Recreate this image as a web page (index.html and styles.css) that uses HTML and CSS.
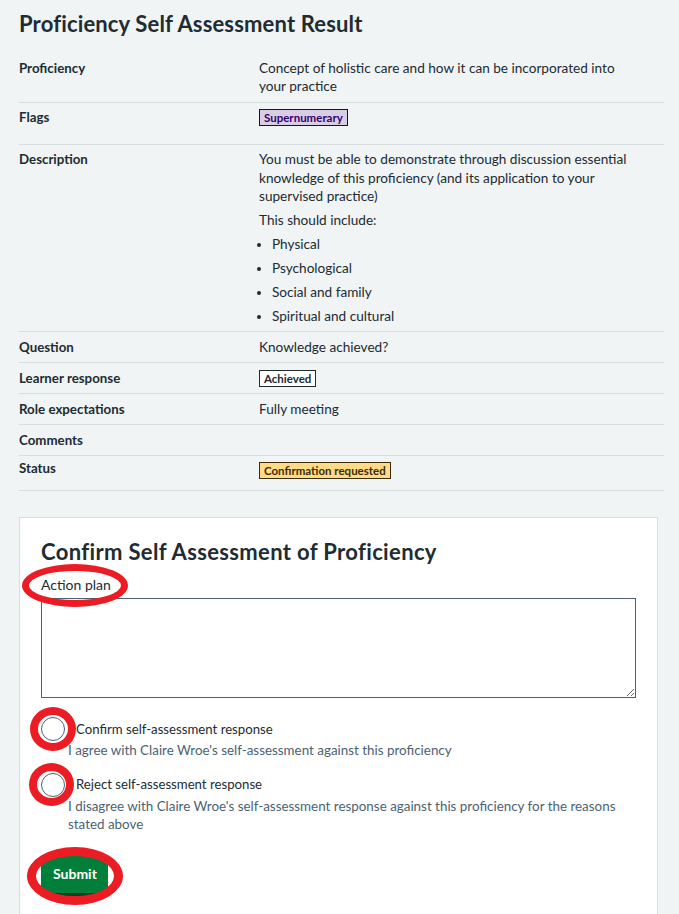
FILE: index.html
```html
<!DOCTYPE html>
<html lang="en">
<head>
<meta charset="utf-8">
<title>Proficiency Self Assessment Result</title>
<link rel="stylesheet" href="styles.css">
</head>
<body>
<main class="page">
  <h1 class="title">Proficiency Self Assessment Result</h1>
  <dl class="summary">
    <div class="row">
      <dt>Proficiency</dt>
      <dd>Concept of holistic care and how it can be incorporated into your practice</dd>
    </div>
    <div class="row row-flags">
      <dt>Flags</dt>
      <dd><span class="tag tag-purple">Supernumerary</span></dd>
    </div>
    <div class="row">
      <dt>Description</dt>
      <dd>
        <p>You must be able to demonstrate through discussion essential knowledge of this proficiency (and its application to your supervised practice)</p>
        <p>This should include:</p>
        <ul>
          <li>Physical</li>
          <li>Psychological</li>
          <li>Social and family</li>
          <li>Spiritual and cultural</li>
        </ul>
      </dd>
    </div>
    <div class="row">
      <dt>Question</dt>
      <dd>Knowledge achieved?</dd>
    </div>
    <div class="row">
      <dt>Learner response</dt>
      <dd><span class="tag tag-white">Achieved</span></dd>
    </div>
    <div class="row">
      <dt>Role expectations</dt>
      <dd>Fully meeting</dd>
    </div>
    <div class="row">
      <dt>Comments</dt>
      <dd></dd>
    </div>
    <div class="row row-status">
      <dt>Status</dt>
      <dd><span class="tag tag-yellow">Confirmation requested</span></dd>
    </div>
  </dl>

  <section class="card">
    <h2 class="card-title">Confirm Self Assessment of Proficiency</h2>
    <label class="field-label" for="plan">Action plan</label>
    <textarea id="plan" class="textarea"></textarea>

    <div class="radios">
      <div class="radio-item">
        <span class="radio-circle"></span>
        <span class="radio-label">Confirm self-assessment response</span>
        <span class="radio-hint">I agree with Claire Wroe's self-assessment against this proficiency</span>
      </div>
      <div class="radio-item">
        <span class="radio-circle"></span>
        <span class="radio-label">Reject self-assessment response</span>
        <span class="radio-hint">I disagree with Claire Wroe's self-assessment response against this proficiency for the reasons stated above</span>
      </div>
    </div>

    <button class="button" type="button">Submit</button>
  </section>

  <div class="mark mark-plan"></div>
  <div class="mark mark-radio1"></div>
  <div class="mark mark-radio2"></div>
  <div class="mark mark-submit"></div>
</main>
</body>
</html>
```
FILE: styles.css
```css
* { box-sizing: border-box; }

html, body {
  margin: 0;
  padding: 0;
  background: #f0f4f5;
}

body {
  font-family: "Lato", "Liberation Sans", sans-serif;
  font-size: 14px;
  line-height: 18.5px;
  color: #212b32;
}

.page {
  position: relative;
  padding: 10px 15px 0 19px;
  min-height: 914px;
  overflow: hidden;
}

.title {
  margin: 0;
  font-size: 22px;
  line-height: 28px;
  font-weight: 700;
  letter-spacing: 0.15px;
}

.summary {
  margin: 14.5px 0 0;
}

.row {
  display: grid;
  grid-template-columns: 240px 1fr;
  padding: 5.5px 0 6px;
  border-bottom: 1px solid #d8dde0;
}

.row:first-child { padding-top: 6px; }

dt {
  font-weight: 700;
  font-size: 13.3px;
}

dd {
  margin: 0;
  min-height: 18.5px;
  font-size: 13.6px;
  padding-right: 28px;
}

dd p {
  margin: 0 0 5px;
}

dd ul {
  margin: 0;
  padding-left: 13px;
}

dd li {
  margin-top: 5.5px;
}

.row-flags dd { padding-bottom: 11px; }
.row-status { padding: 3px 0 11px; }
.row-status .tag { margin-top: 3px; }

.tag {
  display: inline-block;
  font-size: 11.5px;
  line-height: 15px;
  padding: 0 4px;
  border: 1px solid;
  font-weight: 700;
  vertical-align: top;
  margin-top: 1px;
}

.tag-purple {
  background: #d9cde6;
  color: #330072;
  border-color: #2a0052;
}

.tag-white {
  background: #ffffff;
  color: #212b32;
  border-color: #212b32;
}

.tag-yellow {
  background: #ffda88;
  color: #3a2c00;
  border-color: #3a2c00;
}

.card {
  margin: 26px 6px 0 0;
  background: #ffffff;
  border: 1px solid #d8dde0;
  padding: 22px 21px 30px;
}

.card-title {
  margin: 0 0 12px;
  font-size: 22px;
  line-height: 24px;
  font-weight: 700;
  letter-spacing: 0.35px;
}

.field-label {
  display: block;
  margin-bottom: 3.5px;
}

.textarea {
  display: block;
  width: 100%;
  height: 100px;
  border: 1.5px solid #4c6272;
  border-radius: 0;
  background: #fff;
  resize: vertical;
  margin: 0;
}

.radios {
  margin-top: 19px;
  display: flex;
  flex-direction: column;
  gap: 13px;
}

.radio-item {
  display: grid;
  grid-template-columns: 24px 1fr;
  column-gap: 3px;
  align-items: center;
}

.radio-circle {
  grid-row: 1;
  grid-column: 1;
  width: 24px;
  height: 24px;
  border: 1.5px solid #4c6272;
  border-radius: 50%;
  background: #fff;
}

.radio-label {
  grid-row: 1;
  grid-column: 2;
  padding-left: 8px;
  font-size: 13.2px;
}

.radio-hint {
  grid-row: 2;
  grid-column: 2;
  color: #4c6272;
  font-size: 13.4px;
}

.button {
  margin-top: 21px;
  display: inline-block;
  font-family: inherit;
  font-size: 14px;
  font-weight: 700;
  line-height: 18px;
  color: #ffffff;
  background: #007f3b;
  border: 0;
  border-radius: 4px;
  padding: 10px 12px;
  height: 38px;
  width: 67px;
  box-shadow: 0 3px 0 #00401e;
}

.mark {
  position: absolute;
  border: 8px solid #ec1c24;
  border-radius: 50%;
  pointer-events: none;
}

.mark-plan { left: 22px; top: 564px; width: 106px; height: 43px; border-width: 7px; }
.mark-radio1 { left: 30px; top: 707px; width: 46px; height: 44px; }
.mark-radio2 { left: 29px; top: 763px; width: 45px; height: 43px; }
.mark-submit { left: 27px; top: 847px; width: 96px; height: 58px; border-width: 9px; }
```
